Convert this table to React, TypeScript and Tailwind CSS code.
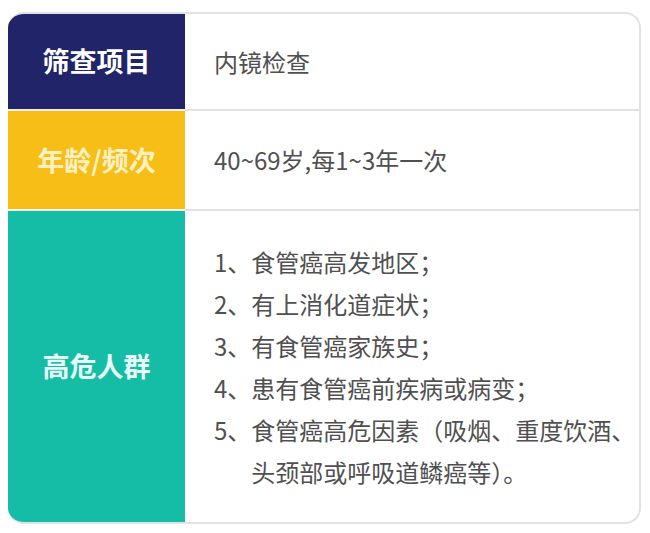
import React from "react";

const font = { fontFamily: '"Noto Sans CJK SC", "Noto Sans", sans-serif' };

export default function App() {
  const items: [string, React.ReactNode][] = [
    ["1、", "食管癌高发地区；"],
    ["2、", "有上消化道症状；"],
    ["3、", "有食管癌家族史；"],
    ["4、", "患有食管癌前疾病或病变；"],
    [
      "5、",
      <>
        食管癌高危因素（吸烟、重度饮酒、
        <br />
        头颈部或呼吸道鳞癌等）。
      </>,
    ],
  ];
  return (
    <div className="w-[650px] h-[533px] bg-white pt-[12px] pl-[8px]" style={font}>
      <div className="w-[633px] h-[512px] flex flex-col rounded-[16px] border-2 border-l-0 border-[#e2e2e2] overflow-hidden bg-white">
        <div className="flex h-[95px]">
          <div className="w-[177px] flex-none bg-[#22246a] flex items-center justify-center text-[27px] font-bold text-white">
            筛查项目
          </div>
          <div className="flex-1 flex items-center pl-[29px] text-[24px] text-[#505050]">
            内镜检查
          </div>
        </div>
        <div className="flex h-[100px] border-t-2 border-[#f3f0e4]">
          <div className="w-[177px] flex-none bg-[#f6be17] flex items-center justify-center text-[27px] font-bold text-[#fdf1c4]">
            年龄/频次
          </div>
          <div className="flex-1 flex items-center pl-[29px] text-[24px] text-[#505050] shadow-[inset_0_2px_0_#e2e2e2] -mt-[2px] pt-[2px]">
            40~69岁,每1~3年一次
          </div>
        </div>
        <div className="flex flex-1 border-t-2 border-[#eef6f2]">
          <div className="w-[177px] flex-none bg-[#16bda6] flex items-center justify-center text-[27px] font-bold text-[#e8fbf6]">
            高危人群
          </div>
          <div className="flex-1 flex flex-col justify-center pl-[29px] text-[24px] leading-[42px] text-[#505050] shadow-[inset_0_2px_0_#e2e2e2] -mt-[2px] pt-[2px] whitespace-nowrap">
            {items.map(([n, t], i) => (
              <div key={i} className="flex">
                <span className="flex-none">{n}</span>
                <span>{t}</span>
              </div>
            ))}
          </div>
        </div>
      </div>
    </div>
  );
}
